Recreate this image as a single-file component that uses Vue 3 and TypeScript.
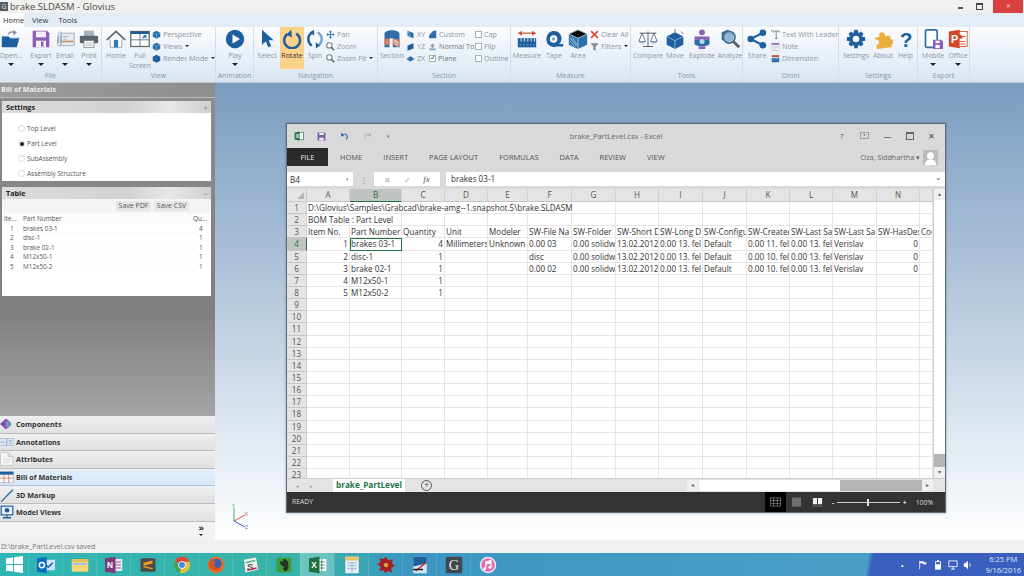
<template>
  <div class="app">
    <header class="title-bar">
      <span class="app-logo">G</span>
      <span class="doc-title">brake.SLDASM  -  Glovius</span>
      <div class="win-btns">
        <span class="win-min"></span>
        <span class="win-max"></span>
        <span class="win-close">✕</span>
      </div>
    </header>

    <nav class="tabs">
      <span class="tab active">Home</span>
      <span class="tab">View</span>
      <span class="tab">Tools</span>
    </nav>

    <section class="ribbon">
      <div v-for="group in groups" :key="group.label" class="group" :style="{ width: group.w + 'px' }">
        <div class="group-items">
          <template v-for="(item, i) in group.items" :key="i">
            <div v-if="item.rows" class="stack" :style="{ width: item.w + 'px' }">
              <div v-for="row in item.rows" :key="row.text" class="stack-row" :class="{ strong: row.strong }">
                <span v-if="row.check !== undefined" class="check" :class="{ checked: row.check }"></span>
                <svg v-else-if="row.icon" class="small-icon" viewBox="0 0 24 24" v-html="icons[row.icon]"></svg>
                <span>{{ row.text }}</span>
                <i v-if="row.caret" class="mini-caret"></i>
              </div>
            </div>
            <div v-else class="big" :class="{ selected: item.selected }"
              :style="{ width: item.w + 'px', marginLeft: (item.ml || 0) + 'px' }">
              <svg class="big-icon" viewBox="0 0 24 24" v-html="icons[item.icon!]"></svg>
              <span class="big-label">{{ item.label }}</span>
              <i v-if="item.caret" class="caret"></i>
            </div>
          </template>
        </div>
        <div class="group-label">{{ group.label }}</div>
      </div>
    </section>

    <main class="workspace">
      <aside class="side">
        <div class="side-head">Bill of Materials</div>

        <div class="panel settings">
          <div class="panel-head">Settings <span class="pin">▴</span></div>
          <div class="radio-list">
            <label v-for="lvl in levels" :key="lvl" class="radio-row">
              <span class="radio" :class="{ on: lvl === 'Part Level' }"></span>{{ lvl }}
            </label>
          </div>
        </div>

        <div class="panel bom">
          <div class="panel-head">Table <span class="pin">ᴗ</span></div>
          <div class="bom-actions">
            <span class="bom-btn">Save PDF</span>
            <span class="bom-btn">Save CSV</span>
          </div>
          <div class="bom-row bom-top"><span>Ite...</span><span>Part Number</span><span>Qu...</span></div>
          <div v-for="p in parts" :key="p.n" class="bom-row">
            <span class="c">{{ p.n }}</span><span>{{ p.name }}</span><span class="c">{{ p.qty }}</span>
          </div>
        </div>

        <div class="side-fill"></div>

        <div v-for="a in accordion" :key="a.label" class="acc" :class="{ current: a.label === 'Bill of Materials' }">
          <svg class="acc-icon" viewBox="0 0 24 24" v-html="icons[a.icon]"></svg>
          <span>{{ a.label }}</span>
        </div>
        <div class="acc-more"><span>»</span><i></i></div>
      </aside>

      <div class="viewport">
        <svg class="triad" viewBox="0 0 20 28">
          <path d="M3 18 L3 5" stroke="#3fae5a" fill="none" />
          <path d="M3 18 L14 12" stroke="#d8504a" fill="none" />
          <path d="M3 18 L14 24" stroke="#3f55c8" fill="none" />
          <text x="1" y="5" fill="#3fae5a" font-size="5">Y</text>
          <text x="14" y="13" fill="#d8504a" font-size="5">X</text>
          <text x="14" y="26" fill="#3f55c8" font-size="5">Z</text>
        </svg>

        <div class="excel">
          <div class="xl-title">
            <svg class="xl-logo" viewBox="0 0 16 16">
              <rect x="6" y="2" width="9" height="12" fill="#fff" stroke="#207245" />
              <path d="M1 2.5 9 1v14l-8-1.5z" fill="#207245" />
              <text x="2.6" y="11" font-size="8" fill="#fff" font-weight="700">X</text>
            </svg>
            <svg class="xl-qa" viewBox="0 0 16 16">
              <path d="M1 1h12l2 2v12H1z" fill="#7c5aa8" />
              <rect x="4" y="1.5" width="8" height="4" fill="#eee" />
              <rect x="4" y="10" width="8" height="5" fill="#eee" />
            </svg>
            <svg class="xl-qa" viewBox="0 0 16 16">
              <path d="M3 6c3-4 9-3 10 2 .3 2-1 4-2 5" fill="none" stroke="#2b6cb0" stroke-width="2" />
              <path d="M2 1.5v6h6z" fill="#2b6cb0" />
            </svg>
            <svg class="xl-qa" viewBox="0 0 16 16">
              <path d="M13 6c-3-4-9-3-10 2-.3 2 1 4 2 5" fill="none" stroke="#b4b4b4" stroke-width="2" />
              <path d="M14 1.5v6H8z" fill="#b4b4b4" />
            </svg>
            <span class="xl-drop">▾</span>
            <span class="xl-name">brake_PartLevel.csv - Excel</span>
            <div class="xl-ctrl">
              <span class="xl-help">?</span>
              <svg viewBox="0 0 12 10" class="xl-ribbon-btn"><rect x=".5" y=".5" width="11" height="9" fill="none" stroke="#888" /><path d="M4 3h4L6 6z" fill="#888" /></svg>
              <span class="xl-min"></span>
              <span class="xl-max"></span>
              <span class="xl-x">✕</span>
            </div>
          </div>

          <div class="xl-tabs">
            <span class="xl-file">FILE</span>
            <span v-for="t in xlTabs" :key="t" class="xl-tab">{{ t }}</span>
            <span class="xl-user">Oza, Siddhartha ▾</span>
            <svg class="xl-avatar" viewBox="0 0 16 16">
              <rect width="16" height="16" fill="#bcbcbc" />
              <circle cx="8" cy="6" r="3.6" fill="#fff" />
              <path d="M2 16c0-5 3-6 6-6s6 1 6 6z" fill="#fff" />
            </svg>
          </div>

          <div class="xl-formula">
            <div class="xl-namebox">B4 <span>▾</span></div>
            <span class="xl-dots">⋮</span>
            <div class="xl-fbtns"><span>✕</span><span>✓</span><em>fx</em></div>
            <div class="xl-input">brakes 03-1 <span>⌄</span></div>
          </div>

          <div class="xl-sheet">
            <div class="xl-grid-wrap">
              <div class="xl-grid">
                <div class="corner"><i></i></div>
                <div v-for="(c, i) in columnLetters" :key="'h' + i" class="col-head" :class="{ sel: c === 'B' }">{{ c }}</div>
                <template v-for="r in 23" :key="r">
                  <div class="row-head" :class="{ sel: r === 4 }">{{ r }}</div>
                  <div v-for="cell in rowCells(r)" :key="cell.key" class="cell"
                    :class="{ num: cell.num, active: r === 4 && cell.col === 1 }"
                    :style="cell.span > 1 ? { gridColumn: 'span ' + cell.span } : undefined">{{ cell.text }}</div>
                </template>
              </div>
            </div>
            <div class="xl-vscroll">
              <span class="arrow">▴</span>
              <span class="v-track"></span>
              <span class="v-thumb"></span>
              <span class="arrow">▾</span>
            </div>
          </div>

          <div class="xl-sheets">
            <span class="nav">◂</span><span class="nav">▸</span>
            <span class="sheet-tab">brake_PartLevel</span>
            <span class="sheet-add">+</span>
            <div class="h-scroll">
              <span class="arrow">◂</span>
              <span class="h-track"></span>
              <span class="h-thumb"></span>
              <span class="arrow">▸</span>
            </div>
          </div>

          <div class="xl-status">
            <span class="ready">READY</span>
            <div class="view-btn on">
              <svg viewBox="0 0 12 10"><path d="M.5.5h11v9H.5zM.5 3.5h11M.5 6.5h11M4 .5v9M8 .5v9" fill="none" stroke="#aaa" stroke-width=".6" /></svg>
            </div>
            <div class="view-btn">
              <svg viewBox="0 0 12 10"><path d="M1.5.5h9v9h-9z" fill="#666" stroke="#999" stroke-width=".6" /><path d="M3.5 3h5v4h-5z" fill="none" stroke="#999" stroke-width=".5" /></svg>
            </div>
            <div class="view-btn">
              <svg viewBox="0 0 12 10"><path d="M1 .5h4.5v7H1zM6.5.5H11v7H6.5z" fill="#eee" /><path d="M0 9.5h12" stroke="#999" stroke-width=".6" /></svg>
            </div>
            <div class="zoom-ctl">
              <b>-</b>
              <div class="slider"><span></span></div>
              <b>+</b>
              <span class="pct">100%</span>
            </div>
          </div>
        </div>
      </div>
    </main>

    <div class="status-line">D:\brake_PartLevel.csv saved</div>

    <footer class="taskbar">
      <svg class="start" viewBox="0 0 18 18">
        <path d="M0 2.5 7.5 1.5v7H0zM8.5 1.3 18 0v8.5H8.5zM0 9.5h7.5v7L0 15.5zM8.5 9.5H18V18l-9.5-1.3z" fill="#fff" />
      </svg>
      <div v-for="t in taskIcons" :key="t.id" class="task" :class="{ running: t.id === 'xl' }">
        <svg viewBox="0 0 24 24" v-html="icons[t.id]"></svg>
      </div>
      <div class="tray">
        <span class="tray-up">▴</span>
        <svg viewBox="0 0 12 12"><path d="M2 1v10" stroke="#fff" /><path d="M2.5 1.5h4l1 1.5h3.5l-2 2.5H6.5l-1-1.5h-3z" fill="#fff" /></svg>
        <svg viewBox="0 0 12 12"><rect x="3" y="2" width="6" height="9" fill="none" stroke="#fff" /><path d="M3 5h6v6H3zM5 0h2v2H5z" fill="#fff" /></svg>
        <svg viewBox="0 0 12 12"><path d="M1 1h10v7H1zM6 8v3M3.5 11h5" fill="none" stroke="#fff" /></svg>
        <svg viewBox="0 0 12 12"><path d="M1 4h2l3-3v10L3 8H1z" fill="#fff" /><path d="M8 4c1 1 1 3 0 4" stroke="#fff" fill="none" /></svg>
        <div class="clock"><span>6:25 PM</span><span>9/16/2016</span></div>
      </div>
    </footer>
  </div>
</template>

<script setup lang="ts">
interface StackRow {
  text: string
  icon?: string
  check?: boolean
  caret?: boolean
  strong?: boolean
}

interface RibbonItem {
  w: number
  ml?: number
  label?: string
  icon?: string
  caret?: boolean
  selected?: boolean
  rows?: StackRow[]
}

interface RibbonGroup {
  label: string
  w: number
  items: RibbonItem[]
}

const BLUE = '#1f5f9e'

const icons: Record<string, string> = {
  open: `<path d="M1 9h8l2 2h11l-3 11H1z" fill="${BLUE}"/><path d="M1 9h8l2 2h11" fill="none" stroke="#5b9bd5"/><path d="M8 8c0-4 3-6 7-5l-1-2 5 3-4 4V5c-3-1-5 0-7 3z" fill="#8a8f96"/>`,
  save: `<path d="M2 2h17l3 3v17H2z" fill="#8b5fb5"/><rect x="6" y="3" width="12" height="7" fill="#f3eef8"/><rect x="6" y="14" width="12" height="8" fill="#f3eef8"/><rect x="12" y="15" width="3" height="6" fill="#8b5fb5"/>`,
  email: `<rect x="7" y="5" width="16" height="15" fill="#e8edf4" stroke="#9aa5b3"/><path d="M8 15h14" stroke="#c98f6a" stroke-width="2"/><path d="M10 9h6M10 12h4" stroke="#9aa5b3"/><path d="M3 9v9c0 3 5 3 5 0V6c0-3-4-3-4 0v10c0 1 2 1 2 0V8" fill="none" stroke="#98a2ad"/>`,
  print: `<rect x="6" y="2" width="12" height="7" fill="#a9b0b8"/><rect x="1" y="8" width="22" height="9" rx="1.5" fill="#5c656e"/><rect x="6" y="14" width="12" height="8" fill="#fff" stroke="#7b838b"/><path d="M8 17h8M8 19.5h8" stroke="#aab"/>`,
  home: `<path d="M1 13 12 3l11 10" fill="none" stroke="#5c656e" stroke-width="2"/><path d="M5 12v10h14V12" fill="#fff" stroke="#8f979f"/><rect x="9.5" y="13" width="5" height="9" fill="#2d78b8"/>`,
  full: `<rect x="1" y="3" width="22" height="18" fill="#fff" stroke="#5c656e" stroke-width="1.5"/><rect x="1" y="3" width="22" height="3" fill="#24598f"/><path d="M1 13h22M12 6v15" stroke="#5c656e"/><path d="M15 11l4-3M16 8h3v3" stroke="#2d78b8" fill="none" stroke-width="1.5"/>`,
  cube: `<path d="M12 2 22 7v11l-10 5-10-5V7z" fill="#2a6fa8"/><path d="M12 12 22 7M12 12 2 7M12 12v11" stroke="#8dbbe0" stroke-width="1.5"/>`,
  cubeDark: `<path d="M12 2 22 7v11l-10 5-10-5V7z" fill="${BLUE}"/><path d="M12 12 22 7M12 12 2 7M12 12v11" stroke="#3d7ab5"/>`,
  play: `<circle cx="12" cy="12" r="11" fill="${BLUE}"/><path d="M9 6.5 18 12 9 17.5z" fill="#fff"/>`,
  select: `<path d="M6 1v18l4.5-4 3 7 3.5-1.5-3-7h6z" fill="${BLUE}"/>`,
  rotate: `<path d="M6.5 6A9.5 9.5 0 1 0 17 5.5" fill="none" stroke="${BLUE}" stroke-width="3"/><path d="M11 1 5 7l7 3z" fill="${BLUE}"/>`,
  spin: `<path d="M9 4C3 7 2 15 8 20" fill="none" stroke="${BLUE}" stroke-width="3"/><path d="M15 4c6 3 7 11 1 16" fill="none" stroke="#7ea6cc" stroke-width="3"/><path d="M11 1 6 4l5 4zM13 16l5 4-5 3z" fill="${BLUE}"/>`,
  pan: `<path d="M12 1 8 6h3v5H6V8l-5 4 5 4v-3h5v5H8l4 5 4-5h-3v-5h5v3l5-4-5-4v3h-5V6h3z" fill="${BLUE}"/>`,
  mag: `<circle cx="9" cy="9" r="7" fill="#fff" stroke="#7a8189" stroke-width="3"/><path d="M14 14l8 8" stroke="#5c656e" stroke-width="4"/>`,
  section: `<path d="M3 6c0-6 18-6 18 0v16h-8V11H9v11H3z" fill="#2d6ea8"/><path d="M13 11l8 2v9l-8-3z" fill="#d77c5e"/><path d="M14 13l6 6M14 16l5 5M16 13l4 4" stroke="#fff"/><path d="M3 11l6 1v8l-6-2z" fill="#d77c5e"/>`,
  planeXY: `<path d="M4 2 20 8v14L4 16z" fill="#2d6ea8"/><path d="M4 2l6 10v10" fill="none" stroke="#a8c8e4" stroke-width="2"/>`,
  planeYZ: `<path d="M20 3v14L4 23V9z" fill="#1f5f9e"/>`,
  planeZX: `<path d="M12 6 23 13 12 20 1 13z" fill="#1f5f9e"/><path d="M1 13h22" stroke="#a8c8e4"/>`,
  custom: `<path d="M3 14 14 2h8v20H3z" fill="#2d6ea8"/>`,
  normal: `<path d="M2 17h20l-3 5H5z" fill="#7ea6cc"/><path d="M12 17V5" stroke="#8aa0b5" stroke-width="4"/><path d="M6 12l6-9 6 9z" fill="#8aa0b5"/>`,
  measure: `<path d="M2 5h20" stroke="#c8553d" stroke-width="1.5"/><path d="M1 5l5-3v6zM23 5l-5-3v6z" fill="#c8553d"/><rect x="1" y="11" width="22" height="11" fill="#1f5f9e"/><path d="M5 11v4M9 11v4M13 11v4M17 11v4M21 11v4" stroke="#fff"/><path d="M3 19h18" stroke="#4a85bd" stroke-width="2" stroke-dasharray="2 2"/>`,
  tape: `<path d="M3 11a9 9 0 1 1 15 7h5v3h-8a9 9 0 0 1-12-10z" fill="${BLUE}"/><circle cx="11.5" cy="12" r="4.5" fill="#fff"/><circle cx="11.5" cy="12" r="2" fill="#7ea6cc"/>`,
  area: `<path d="M12 1 23 6v13l-11 5-11-5V6z" fill="#2d6ea8"/><path d="M12 11 23 6M12 11 1 6l11-5 11 5M12 11v13" stroke="#bcd4ea"/><path d="M2 10l8 10M2 14l6 7M5 10l6 9" stroke="#bcd4ea"/>`,
  clear: `<path d="M3 3l18 18M21 3 3 21" stroke="#d1472f" stroke-width="4"/>`,
  filter: `<path d="M1 3h22l-8 9v10h-6V12z" fill="#808a94"/>`,
  compare: `<path d="M12 3v18M6 21h12M2 5h20" stroke="#5c6873" stroke-width="1.2" fill="none"/><path d="M5 5 1 15h8zM19 5l-4 10h8z" fill="none" stroke="#5c6873"/><path d="M1 15c1 3 7 3 8 0zM15 15c1 3 7 3 8 0z" fill="#8fb0cf"/>`,
  move: `<path d="M12 4 22 9v10l-10 5-10-5V9z" fill="${BLUE}"/><path d="M12 14 22 9M12 14 2 9M12 14v10" stroke="#8dbbe0"/><path d="M12 0v4M19 3l3 3" stroke="#5c656e"/>`,
  explode: `<circle cx="12" cy="4" r="3.5" fill="#8b5fb5"/><path d="M3 9h18v4H3z" fill="#8b5fb5"/><path d="M3 13h18v5c-2 4-16 4-18 0z" fill="#2d6ea8"/><circle cx="12" cy="15" r="3" fill="#bcd4ea"/><path d="M8 21h8v3H8z" fill="#8b5fb5"/>`,
  analyze: `<path d="M2 4 9 1l7 3v9l-7 3-7-3z" fill="#2d6ea8"/><circle cx="11" cy="10" r="7" fill="#bcd4ea" fill-opacity=".7" stroke="#4a6a85" stroke-width="2"/><path d="M16 15l7 7" stroke="#5c656e" stroke-width="3.5"/>`,
  share: `<circle cx="4.5" cy="12" r="4" fill="${BLUE}"/><circle cx="19" cy="4.5" r="4" fill="${BLUE}"/><circle cx="19" cy="19.5" r="4" fill="${BLUE}"/><path d="M19 4.5 4.5 12 19 19.5" fill="none" stroke="${BLUE}" stroke-width="2.5"/>`,
  leader: `<path d="M7 3h15M14 3v20M10 23h8M7 3v4M22 3v4" stroke="#5c6873" stroke-width="2" fill="none"/><circle cx="2" cy="2" r="2" fill="#5c6873"/>`,
  note: `<rect x="2" y="3" width="20" height="19" fill="#f2f4f7" stroke="#9aa5b3"/><rect x="2" y="3" width="20" height="4" fill="#8b5fb5"/><path d="M5 11h14M5 15h14M5 19h10" stroke="#9aa5b3"/>`,
  dimension: `<rect x="2" y="10" width="20" height="12" fill="#2d6ea8"/><rect x="2" y="3" width="20" height="5" fill="#c8553d"/><path d="M6 10v4M10 10v4M14 10v4M18 10v4" stroke="#fff"/>`,
  gear: `<path d="M10 1h4l1 4 3-2 3 3-2 3 4 1v4l-4 1 2 3-3 3-3-2-1 4h-4l-1-4-3 2-3-3 2-3-4-1v-4l4-1-2-3 3-3 3 2z" fill="${BLUE}"/><circle cx="12" cy="12" r="4" fill="#eef3f9"/>`,
  about: `<path d="M3 9h5c-1-7 8-7 7 0h6v5c5-1 5 7 0 6v3H3v-5c5 1 5-7 0-6z" fill="#ecae3a" transform="rotate(-8 12 12)"/>`,
  help: `<text x="12" y="21" text-anchor="middle" font-size="25" font-weight="700" font-family="Liberation Sans, sans-serif" fill="${BLUE}">?</text>`,
  mobile: `<rect x="3" y="1" width="14" height="21" rx="2" fill="#fff" stroke="#2d6ea8" stroke-width="2"/><path d="M12 13h10l2 2v9H12z" fill="#8b5fb5"/><rect x="15" y="14" width="5" height="3" fill="#fff"/><rect x="15" y="19" width="5" height="4" fill="#fff"/>`,
  office: `<rect x="9" y="3" width="14" height="18" fill="#fff" stroke="#d24726"/><path d="M12 6a5 5 0 0 1 5 5h-5zM14 9h7M14 15h7M14 18h7" fill="#d24726" stroke="#d24726"/><path d="M1 3 14 1v22L1 21z" fill="#d24726"/><text x="3.5" y="17" font-size="13" font-weight="700" fill="#fff" font-family="Liberation Sans, sans-serif">P</text>`,
  components: `<path d="M0 12 10 3l6 4v10l-6 4z" fill="#7d4fb0"/><path d="M10 7l8 2v7l-8 2z" fill="#a98ad0"/><rect x="13" y="9" width="6" height="6" fill="#4fa3a3"/>`,
  annotations: `<rect x="-2" y="6" width="13" height="12" fill="#dfe8f2" stroke="#8ea9c4"/><rect x="12" y="6" width="12" height="12" fill="#dfe8f2" stroke="#8ea9c4"/><path d="M1 12h7M15 10h6M15 14h6" stroke="#5d8bb8"/>`,
  attributes: `<path d="M1 1h13l8 7v15H1z" fill="#f5f5f5" stroke="#b5b5b5"/><path d="M14 1v7h8" fill="#ddd" stroke="#b5b5b5"/><path d="M5 12h12M5 15h12M5 18h12" stroke="#ccc"/>`,
  bom: `<rect x="-1" y="3" width="24" height="19" fill="#f5f5f5" stroke="#aaa"/><rect x="-1" y="3" width="24" height="5" fill="${BLUE}"/><path d="M-1 14h24M7 8v14M15 8v14" stroke="#c8553d"/>`,
  markup: `<path d="M1 23 21 2l2 2L3 24z" fill="#2d6ea8"/>`,
  views: `<rect x="2" y="2" width="20" height="15" fill="#e8f0f8" stroke="${BLUE}" stroke-width="2"/><circle cx="12" cy="9" r="4" fill="${BLUE}"/><path d="M12 17v3M5 22h14" stroke="${BLUE}" stroke-width="2.5"/>`,
  ol: `<rect x="10" y="5" width="14" height="14" fill="#cfe2f5"/><path d="M12 12l3 3 6-6" stroke="#0a5fa8" stroke-width="2" fill="none"/><path d="M0 3 13 1v22L0 21z" fill="#0a6cbd"/><circle cx="6.5" cy="12" r="3.5" fill="none" stroke="#fff" stroke-width="2"/>`,
  folder: `<rect x="1" y="4" width="22" height="17" rx="1" fill="#f5d67a"/><rect x="1" y="4" width="22" height="4" fill="#e6c15a"/><rect x="3" y="9" width="18" height="3" fill="#9cc7e8"/>`,
  one: `<rect x="12" y="4" width="11" height="16" fill="#e9e3f1"/><path d="M14 8h7M14 12h7M14 16h7" stroke="#80397b"/><path d="M0 3 14 1v22L0 21z" fill="#80397b"/><text x="2.5" y="16" font-size="11" font-weight="700" fill="#fff" font-family="Liberation Sans, sans-serif">N</text>`,
  sublime: `<rect x="2" y="3" width="20" height="18" rx="2" fill="#4a4a4a"/><path d="M6 9l12-3v4L6 13zM6 13l12 3v2L6 15z" fill="#f39c1f"/>`,
  chrome: `<circle cx="12" cy="12" r="11" fill="#e0c33e"/><path d="M12 12 2.5 6.5A11 11 0 0 1 22 7.5H12z" fill="#d8483b"/><path d="M12 12 2.5 6.5A11 11 0 0 0 9 22.6z" fill="#3fa35c"/><circle cx="12" cy="12" r="5" fill="#fff"/><circle cx="12" cy="12" r="4" fill="#4a88e0"/>`,
  firefox: `<circle cx="12" cy="12" r="11" fill="#e8702a"/><circle cx="13" cy="10" r="6.5" fill="#3c5fa8"/><path d="M2 12c2 8 14 10 20 3-4 3-10 2-12-2-1-3 0-5 2-6-4 0-6-2-5-4C3 6 2 9 2 12z" fill="#d9531e"/>`,
  slack: `<path d="M4 5l16-3 3 16-17 4z" fill="#f4f1ea"/><path d="M6 9l13-3" stroke="#3eb991" stroke-width="2"/><path d="M8 19l13-3" stroke="#e01563" stroke-width="2"/><text x="8" y="18" font-size="13" font-weight="700" fill="#555" font-family="Liberation Sans, sans-serif">S</text>`,
  evernote: `<rect x="2" y="2" width="20" height="20" rx="3" fill="#3f9b3f"/><path d="M7 7h4V4c3 0 7 1 7 9 0 5-2 7-4 7s-3-1-3-3c0-3 4-2 3-1-4-3-8-4-7-9z" fill="#232"/>`,
  xl: `<rect x="11" y="4" width="12" height="16" fill="#fff"/><path d="M14 8h7M14 12h7M14 16h7M17 4v16" stroke="#207245"/><path d="M0 3 14 1v22L0 21z" fill="#207245"/><text x="3" y="16" font-size="11" font-weight="700" fill="#fff" font-family="Liberation Sans, sans-serif">X</text>`,
  calc: `<rect x="3" y="1" width="18" height="22" fill="#e8eef5"/><rect x="3" y="1" width="18" height="5" fill="#e8c26a"/><path d="M6 9h12M6 13h12M6 17h12M12 9v12" stroke="#7ea6cc"/>`,
  red: `<path d="M12 1l3 5 6-2-1 6 4 3-5 3 1 6-6-2-3 3-2-4-6 1 2-6-5-3 5-3-2-5 6 1z" fill="#a41f24"/><circle cx="12" cy="12" r="3" fill="#d8a33a"/>`,
  cad: `<rect x="3" y="1" width="18" height="22" fill="#d7e4f2"/><path d="M3 1h18v9L3 14z" fill="#1f5f9e"/><path d="M6 20 20 9" stroke="#c8302a" stroke-width="2"/><path d="M3 18h13" stroke="#222" stroke-width="2"/>`,
  g: `<rect x="1" y="1" width="22" height="22" rx="2" fill="#3f474f"/><text x="12" y="19" text-anchor="middle" font-size="19" font-family="Liberation Serif, serif" fill="#e8e8e8">G</text>`,
  itunes: `<circle cx="12" cy="12" r="11" fill="#f2e9f4"/><circle cx="12" cy="12" r="9" fill="#df6fae"/><path d="M9 8v9M16 6v9M9 8l7-2v3L9 11z" stroke="#fff" stroke-width="1.5" fill="#fff"/><circle cx="7.5" cy="17" r="2" fill="#fff"/><circle cx="14.5" cy="15" r="2" fill="#fff"/>`
}

const groups: RibbonGroup[] = [
  {
    label: 'File', w: 102, items: [
      { w: 22, label: 'Open...', icon: 'open', caret: true },
      { w: 24, ml: 7, label: 'Export', icon: 'save', caret: true },
      { w: 24, label: 'Email', icon: 'email', caret: true },
      { w: 24, label: 'Print', icon: 'print', caret: true }
    ]
  },
  {
    label: 'View', w: 114, items: [
      { w: 24, ml: 2, label: 'Home', icon: 'home' },
      { w: 24, label: 'Full Screen', icon: 'full' },
      {
        w: 64, rows: [
          { text: 'Perspective', icon: 'cube' },
          { text: 'Views', icon: 'cube', caret: true },
          { text: 'Render Mode', icon: 'cubeDark', caret: true }
        ]
      }
    ]
  },
  { label: 'Animation', w: 38, items: [{ w: 38, label: 'Play', icon: 'play', caret: true }] },
  {
    label: 'Navigation', w: 124, items: [
      { w: 26, label: 'Select', icon: 'select' },
      { w: 24, label: 'Rotate', icon: 'rotate', selected: true },
      { w: 22, label: 'Spin', icon: 'spin' },
      {
        w: 52, rows: [
          { text: 'Pan', icon: 'pan' },
          { text: 'Zoom', icon: 'mag' },
          { text: 'Zoom Fit', icon: 'mag', caret: true }
        ]
      }
    ]
  },
  {
    label: 'Section', w: 133, items: [
      { w: 28, label: 'Section', icon: 'section' },
      {
        w: 22, rows: [
          { text: 'XY', icon: 'planeXY' },
          { text: 'YZ', icon: 'planeYZ' },
          { text: 'ZX', icon: 'planeZX' }
        ]
      },
      {
        w: 46, rows: [
          { text: 'Custom', icon: 'custom' },
          { text: 'Normal To', icon: 'normal', strong: true },
          { text: 'Plane', check: true, strong: true }
        ]
      },
      {
        w: 37, rows: [
          { text: 'Cap', check: false },
          { text: 'Flip', check: false },
          { text: 'Outline', check: false }
        ]
      }
    ]
  },
  {
    label: 'Measure', w: 120, items: [
      { w: 30, ml: 1, label: 'Measure', icon: 'measure' },
      { w: 24, label: 'Tape', icon: 'tape' },
      { w: 24, label: 'Area', icon: 'area' },
      {
        w: 41, rows: [
          { text: 'Clear All', icon: 'clear' },
          { text: 'Filters', icon: 'filter', caret: true }
        ]
      }
    ]
  },
  {
    label: 'Tools', w: 112, items: [
      { w: 34, label: 'Compare', icon: 'compare' },
      { w: 20, label: 'Move', icon: 'move' },
      { w: 30, ml: 2, label: 'Explode', icon: 'explode' },
      { w: 26, label: 'Analyze', icon: 'analyze' }
    ]
  },
  {
    label: 'Omni', w: 96, items: [
      { w: 28, label: 'Share', icon: 'share' },
      {
        w: 68, rows: [
          { text: 'Text With Leader', icon: 'leader' },
          { text: 'Note', icon: 'note' },
          { text: 'Dimension', icon: 'dimension' }
        ]
      }
    ]
  },
  {
    label: 'Settings', w: 79, items: [
      { w: 34, label: 'Settings', icon: 'gear' },
      { w: 20, label: 'About', icon: 'about' },
      { w: 25, label: 'Help', icon: 'help' }
    ]
  },
  {
    label: 'Export', w: 52, items: [
      { w: 30, label: 'Mobile', icon: 'mobile', caret: true },
      { w: 20, label: 'Office', icon: 'office', caret: true }
    ]
  }
]

const levels = ['Top Level', 'Part Level', 'SubAssembly', 'Assembly Structure']

const parts = [
  { n: 1, name: 'brakes 03-1', qty: 4 },
  { n: 2, name: 'disc-1', qty: 1 },
  { n: 3, name: 'brake 02-1', qty: 1 },
  { n: 4, name: 'M12x50-1', qty: 1 },
  { n: 5, name: 'M12x50-2', qty: 1 }
]

const accordion = [
  { label: 'Components', icon: 'components' },
  { label: 'Annotations', icon: 'annotations' },
  { label: 'Attributes', icon: 'attributes' },
  { label: 'Bill of Materials', icon: 'bom' },
  { label: '3D Markup', icon: 'markup' },
  { label: 'Model Views', icon: 'views' }
]

const xlTabs = ['HOME', 'INSERT', 'PAGE LAYOUT', 'FORMULAS', 'DATA', 'REVIEW', 'VIEW']

const columnLetters = ['A', 'B', 'C', 'D', 'E', 'F', 'G', 'H', 'I', 'J', 'K', 'L', 'M', 'N', '']

const sheet: Record<number, string[]> = {
  3: ['Item No.', 'Part Number', 'Quantity', 'Unit', 'Modeler', 'SW-File Na', 'SW-Folder', 'SW-Short D', 'SW-Long D', 'SW-Configu', 'SW-Created', 'SW-Last Sa', 'SW-Last Sa', 'SW-HasDes', 'Cou'],
  4: ['1', 'brakes 03-1', '4', 'Millimeters', 'Unknown', '0.00 03', '0.00 solidw', '13.02.2012', '0.00 13. fel', 'Default', '0.00 11. fel', '0.00 13. fel', 'Verislav', '0', ''],
  5: ['2', 'disc-1', '1', '', '', 'disc', '0.00 solidw', '13.02.2012', '0.00 13. fel', 'Default', '0.00 10. fel', '0.00 13. fel', 'Verislav', '0', ''],
  6: ['3', 'brake 02-1', '1', '', '', '0.00 02', '0.00 solidw', '13.02.2012', '0.00 13. fel', 'Default', '0.00 10. fel', '0.00 13. fel', 'Verislav', '0', ''],
  7: ['4', 'M12x50-1', '1'],
  8: ['5', 'M12x50-2', '1']
}

const rowCells = (r: number) => {
  // rows 1 and 2 hold long text that spills over the next cells
  const lead: Record<number, [string, number]> = {
    1: ['D:\\Glovius\\Samples\\Grabcad\\brake-amg--1.snapshot.5\\brake.SLDASM', 7],
    2: ['BOM Table : Part Level', 2]
  }
  const out: { key: string; col: number; text: string; span: number; num: boolean }[] = []
  let start = 0
  if (lead[r]) {
    out.push({ key: r + '-0', col: 0, text: lead[r][0], span: lead[r][1], num: false })
    start = lead[r][1]
  }
  for (let c = start; c < 15; c++) {
    const text = sheet[r]?.[c] ?? ''
    out.push({ key: r + '-' + c, col: c, text, span: 1, num: /^\d+$/.test(text) })
  }
  return out
}

const taskIcons = ['ol', 'folder', 'one', 'sublime', 'chrome', 'firefox', 'slack', 'evernote', 'xl', 'calc', 'red', 'cad', 'g', 'itunes']
  .map((id) => ({ id }))
</script>

<style>
html,
body {
  margin: 0;
  background: #fff;
}
</style>

<style scoped>
.app {
  width: 1024px;
  height: 576px;
  display: flex;
  flex-direction: column;
  overflow: hidden;
  font-family: "Open Sans", "Liberation Sans", sans-serif;
  color: #333;
}

.title-bar {
  height: 13px;
  flex: none;
  display: flex;
  align-items: center;
  background: #f0f0ee;
  font-size: 9.5px;
  color: #4a4a4a;
}

.app-logo {
  width: 8px;
  height: 9px;
  margin-right: 2px;
  background: #555c66;
  color: #ddd;
  font-size: 7px;
  line-height: 9px;
  text-align: center;
}

.doc-title {
  white-space: pre;
}

.win-btns {
  margin-left: auto;
  display: flex;
  align-items: center;
  height: 13px;
}

.win-min {
  width: 5px;
  height: 2px;
  margin-top: 3px;
  background: #555;
}

.win-max {
  width: 5px;
  height: 4px;
  margin-left: 13px;
  border: 1px solid #444;
  border-top-width: 2px;
}

.win-close {
  width: 30px;
  height: 13px;
  margin-left: 10px;
  margin-right: 1px;
  background: #d9403f;
  color: #f5dada;
  font-size: 6px;
  line-height: 13px;
  text-align: center;
}

.tabs {
  height: 14px;
  flex: none;
  display: flex;
  background: #e4ecf5;
  font-size: 7.5px;
}

.tab {
  padding: 0 2px 0 8px;
  line-height: 14px;
}

.tab.active {
  padding: 0 3px;
  background: #fdfdfe;
  width: 18px;
}

.ribbon {
  height: 56px;
  flex: none;
  display: flex;
  background: linear-gradient(#fbfcfe, #dae5f2);
  border-bottom: 1px solid #b9c8d8;
  box-sizing: border-box;
}

.group {
  flex: none;
  display: flex;
  flex-direction: column;
  box-sizing: border-box;
  border-right: 1px solid #d4deea;
}

.group-items {
  height: 43px;
  display: flex;
}

.group-label {
  font-size: 7px;
  line-height: 9px;
  color: #8b97a3;
  text-align: center;
  margin-top: 1px;
}

.big {
  flex: none;
  display: flex;
  flex-direction: column;
  align-items: center;
  box-sizing: border-box;
  padding-top: 2px;
  height: 42px;
}

.big.selected {
  background: #fbd28a;
}

.big.selected .big-label {
  color: #333;
}

.big-icon {
  width: 20px;
  height: 20px;
  flex: none;
}

.big-label {
  font-size: 7px;
  line-height: 10px;
  margin-top: 2px;
  color: #8b97a3;
  text-align: center;
  white-space: pre-line;
}

.caret {
  width: 0;
  height: 0;
  margin-top: 2px;
  border: 3px solid transparent;
  border-top-color: #222;
  border-bottom: 0;
}

.stack {
  flex: none;
  display: flex;
  flex-direction: column;
  padding-top: 1px;
  box-sizing: border-box;
}

.stack-row {
  height: 12px;
  display: flex;
  align-items: center;
  gap: 1px;
  font-size: 7.2px;
  color: #8b97a3;
  white-space: nowrap;
}

.stack-row.strong {
  color: #6e7883;
}

.small-icon {
  width: 9px;
  height: 9px;
  flex: none;
  margin-right: 1px;
}

.check {
  width: 5px;
  height: 5px;
  flex: none;
  margin-left: 1px;
  margin-right: 1px;
  border: 1px solid #a8b0b8;
  background: #fff;
  position: relative;
}

.check.checked::after {
  content: "✓";
  position: absolute;
  left: 0;
  top: -3px;
  font-size: 7px;
  line-height: 10px;
  color: #333;
}

.mini-caret {
  width: 0;
  height: 0;
  margin-left: 2px;
  border: 2px solid transparent;
  border-top-color: #222;
  border-bottom: 0;
}

.workspace {
  flex: 1;
  min-height: 0;
  display: flex;
}

.side {
  width: 215px;
  flex: none;
  display: flex;
  flex-direction: column;
  background: linear-gradient(#8c8c8c, #7f7f7f 50%, #a8a8a8 75%);
}

.side-head {
  height: 14px;
  line-height: 14px;
  padding-left: 1px;
  font-size: 7px;
  font-weight: 700;
  color: #eee;
  background: linear-gradient(90deg, #9c9c9c, #8e8e8e);
  border-bottom: 1px solid #bbb;
}

.panel {
  margin: 3px 4px 0 2px;
  background: #fff;
}

.settings {
  height: 80px;
  margin-top: 3px;
}

.panel-head {
  height: 12px;
  display: flex;
  justify-content: space-between;
  padding: 0 4px;
  font-size: 7.2px;
  font-weight: 700;
  line-height: 12px;
  color: #222;
  background: linear-gradient(90deg, #dcdcdc, #d2d2d2 60%, #e8e8e8 80%, #cfcfcf);
}

.pin {
  font-weight: 400;
  color: #999;
  font-size: 6px;
}

.radio-list {
  display: flex;
  flex-direction: column;
  padding-top: 8px;
  padding-left: 16px;
}

.radio-row {
  height: 15px;
  display: flex;
  align-items: center;
  gap: 2px;
  font-size: 6.5px;
  color: #555;
}

.radio {
  width: 5px;
  height: 5px;
  border-radius: 50%;
  border: 1px solid #d8d8d8;
  background: #fff;
  position: relative;
}

.radio.on::after {
  content: "";
  position: absolute;
  left: 0.5px;
  top: 0.5px;
  width: 4px;
  height: 4px;
  border-radius: 50%;
  background: #222;
}

.bom {
  height: 109px;
  margin-top: 6px;
}

.bom-actions {
  height: 14px;
  display: flex;
  justify-content: flex-end;
  align-items: center;
  gap: 3px;
  padding-right: 22px;
  background: #f4f4f4;
}

.bom-btn {
  width: 35px;
  height: 10px;
  line-height: 10px;
  font-size: 7px;
  text-align: center;
  color: #555;
  background: #e6e6e6;
}

.bom-row {
  display: grid;
  grid-template-columns: 19px 1fr 18px;
  height: 9.4px;
  line-height: 9.4px;
  font-size: 6.4px;
  color: #555;
  padding-left: 2px;
  border-bottom: 1px solid #fafafa;
  box-sizing: border-box;
}

.bom-top {
  height: 11px;
  line-height: 11px;
  background: #fbfbfb;
}

.c {
  padding-left: 6px;
}

.side-fill {
  flex: 1;
}

.acc {
  height: 17.6px;
  flex: none;
  display: flex;
  align-items: center;
  box-sizing: border-box;
  font-size: 7.2px;
  font-weight: 700;
  color: #333;
  background: linear-gradient(#efefef, #e0e0e0);
  border-bottom: 1px solid #bcbcbc;
}

.acc.current {
  background: linear-gradient(#e4f0fb, #d4e6f6);
  border-bottom-color: #a9c4dc;
}

.acc-icon {
  width: 14px;
  height: 14px;
  flex: none;
  margin-right: 2px;
}

.acc-more {
  height: 18.5px;
  flex: none;
  display: flex;
  flex-direction: column;
  align-items: flex-end;
  padding-right: 11px;
  background: #f2f2f2;
  font-size: 9px;
  line-height: 12px;
  font-weight: 700;
}

.acc-more i {
  width: 0;
  height: 0;
  margin-right: 1px;
  border: 2px solid transparent;
  border-top-color: #222;
  border-bottom: 0;
}

.viewport {
  flex: 1;
  position: relative;
  background: linear-gradient(#7b9dc0, #a6bdd6 35%, #dce6f0 75%, #ffffff);
}

.triad {
  position: absolute;
  left: 16px;
  bottom: 9px;
  width: 20px;
  height: 28px;
}

/* the Excel window sits freely on the viewport, like a desktop window */
.excel {
  position: absolute;
  left: 71px;
  top: 40px;
  width: 660px;
  height: 390px;
  box-sizing: border-box;
  display: flex;
  flex-direction: column;
  border: 1px solid #5d6d7d;
  background: #d9d9d9;
  box-shadow: 0 0 2px rgba(40, 60, 80, 0.5);
  font-size: 8.15px;
  color: #444;
}

.xl-title {
  height: 24px;
  flex: none;
  display: flex;
  align-items: center;
  padding-left: 7px;
}

.xl-logo {
  width: 10px;
  height: 10px;
}

.xl-qa {
  width: 9px;
  height: 9px;
  margin-left: 13px;
}

.xl-qa + .xl-qa {
  margin-left: 14px;
}

.xl-drop {
  margin-left: 15px;
  font-size: 5px;
  color: #777;
}

.xl-name {
  position: absolute;
  left: 0;
  right: 0;
  top: 7px;
  text-align: center;
  font-size: 7.5px;
  color: #666;
  pointer-events: none;
}

.xl-ctrl {
  margin-left: auto;
  display: flex;
  align-items: center;
  position: relative;
  height: 12px;
  margin-top: -1px;
  width: 110px;
  color: #555;
}

.xl-help {
  margin-left: 5px;
  font-size: 8px;
}

.xl-ribbon-btn {
  width: 9px;
  height: 7px;
  margin-left: 17px;
}

.xl-min {
  width: 7px;
  height: 1px;
  margin-left: 15px;
  margin-top: 3px;
  background: #777;
}

.xl-max {
  width: 6px;
  height: 5px;
  margin-left: 15px;
  border: 1px solid #666;
  border-top-width: 2px;
}

.xl-x {
  margin-left: 14px;
  font-size: 8px;
  color: #444;
}

.xl-tabs {
  height: 18px;
  flex: none;
  display: flex;
  align-items: center;
  font-size: 7.5px;
  color: #555;
}

.xl-file {
  width: 41px;
  height: 18px;
  line-height: 18px;
  background: #2b2b2b;
  color: #e8e8e8;
  text-align: center;
  margin-right: 12px;
}

.xl-tab {
  margin-right: 21px;
}

.xl-user {
  margin-left: auto;
  margin-right: 3px;
  font-size: 7.2px;
  color: #666;
}

.xl-avatar {
  width: 15px;
  height: 15px;
  margin-right: 7px;
}

.xl-formula {
  height: 14px;
  flex: none;
  display: flex;
  align-items: center;
  padding-top: 6px;
}

.xl-namebox {
  width: 66px;
  height: 14px;
  display: flex;
  justify-content: space-between;
  align-items: center;
  padding: 0 4px 0 3px;
  box-sizing: border-box;
  background: #fff;
  color: #333;
}

.xl-namebox span {
  color: #888;
  font-size: 5px;
}

.xl-dots {
  width: 21px;
  text-align: center;
  color: #888;
}

.xl-fbtns {
  width: 66px;
  height: 14px;
  display: flex;
  align-items: center;
  justify-content: space-around;
  background: #fff;
  color: #aaa;
  padding: 0 4px;
  box-sizing: border-box;
}

.xl-fbtns em {
  font-family: "Liberation Serif", serif;
  color: #555;
  font-size: 9px;
}

.xl-input {
  flex: 1;
  height: 14px;
  line-height: 14px;
  margin-left: 6px;
  padding-left: 5px;
  display: flex;
  justify-content: space-between;
  background: #fff;
  color: #333;
}

.xl-input span {
  margin-right: 3px;
  margin-top: -2px;
  color: #666;
}

.xl-sheet {
  margin-top: 3px;
  height: 289px;
  flex: none;
  display: flex;
  background: #fff;
}

.xl-grid-wrap {
  width: 646px;
  height: 289px;
  overflow: hidden;
}

.xl-grid {
  display: grid;
  grid-template-columns: 20px 43px 52px 43px 43px 40px 44px 44px 43px 44px 44px 43px 43px 44px 43px 13px;
  grid-template-rows: 13px repeat(23, 12.15px);
  width: 646px;
}

.corner {
  background: #e4e4e4;
  border-right: 1px solid #ccc;
  border-bottom: 1px solid #ccc;
  position: relative;
}

.corner i {
  position: absolute;
  right: 2px;
  bottom: 2px;
  border-style: solid;
  border-width: 0 0 7px 7px;
  border-color: transparent transparent #b5b5b5 transparent;
}

.col-head,
.row-head {
  background: #e4e4e4;
  text-align: center;
  color: #555;
  box-sizing: border-box;
  border-right: 1px solid #d0d0d0;
  border-bottom: 1px solid #c6c6c6;
  font-size: 8.15px;
  line-height: 12px;
}

.col-head.sel {
  background: #c0c4c0;
  color: #217346;
  border-bottom: 1px solid #217346;
}

.row-head.sel {
  background: #c0c4c0;
  color: #217346;
  border-right: 1px solid #217346;
}

.cell {
  box-sizing: border-box;
  border-right: 1px solid #e6e6e6;
  border-bottom: 1px solid #e6e6e6;
  padding: 0 1px;
  overflow: hidden;
  white-space: nowrap;
  font-size: 8.15px;
  line-height: 11px;
  color: #333;
}

.cell.num {
  text-align: right;
}

.cell.active {
  border: 1px solid #217346;
  line-height: 10px;
  padding: 0;
}

.xl-vscroll {
  width: 12px;
  height: 289px;
  display: flex;
  flex-direction: column;
  background: #fff;
  border-left: 1px solid #d0d0d0;
  box-sizing: border-box;
}

.arrow {
  flex: none;
  height: 11px;
  width: 11px;
  line-height: 11px;
  text-align: center;
  font-size: 6px;
  color: #666;
  background: #f0f0f0;
}

.v-track {
  flex: 1;
  background: #fff;
}

.v-thumb {
  height: 13px;
  flex: none;
  background: #b5b5b5;
}

.xl-sheets {
  height: 14px;
  flex: none;
  display: flex;
  align-items: center;
  background: #e4e4e4;
  border-top: 1px solid #ccc;
  box-sizing: border-box;
}

.nav {
  width: 14px;
  text-align: center;
  font-size: 5px;
  color: #999;
  margin-left: 3px;
}

.nav + .nav {
  margin-left: 0;
}

.sheet-tab {
  margin-left: 15px;
  width: 72px;
  height: 13px;
  line-height: 12px;
  background: #fff;
  color: #217346;
  font-weight: 700;
  text-align: center;
  font-size: 8.2px;
}

.sheet-add {
  width: 9px;
  height: 9px;
  margin-left: 16px;
  border-radius: 50%;
  border: 1px solid #555;
  text-align: center;
  line-height: 8px;
  font-size: 9px;
  color: #555;
}

.h-scroll {
  margin-left: auto;
  margin-right: 12px;
  width: 246px;
  height: 11px;
  display: flex;
}

.h-track {
  flex: none;
  width: 141px;
  background: #fff;
  margin-left: 1px;
}

.h-thumb {
  flex: none;
  width: 82px;
  background: #b5b5b5;
}

.xl-status {
  flex: 1;
  display: flex;
  align-items: stretch;
  background: #333;
  color: #ddd;
  font-size: 6.8px;
}

.ready {
  line-height: 20px;
  margin-left: 5px;
  margin-right: auto;
}

.view-btn {
  width: 21px;
  display: flex;
  align-items: center;
  justify-content: center;
}

.view-btn.on {
  background: #000;
}

.view-btn svg {
  width: 11px;
  height: 10px;
}

.zoom-ctl {
  display: flex;
  align-items: center;
  margin-left: 4px;
  margin-right: 12px;
  gap: 3px;
}

.slider {
  width: 63px;
  height: 1px;
  background: #ccc;
  position: relative;
}

.slider span {
  position: absolute;
  left: 30px;
  top: -3px;
  width: 2px;
  height: 7px;
  background: #ddd;
}

.pct {
  margin-left: 6px;
}

.status-line {
  height: 13px;
  flex: none;
  padding-left: 1px;
  background: #f0f0f0;
  color: #777;
  font-size: 7px;
  line-height: 13px;
}

.taskbar {
  height: 23px;
  flex: none;
  display: flex;
  align-items: center;
  background: linear-gradient(100deg, #2fb5b5 0, #3ab3a8 30%, #3b97c2 40%, #4a9fc6 84.5%, #3a5fbf 85%, #3a5fbf 100%);
}

.start {
  width: 17px;
  height: 17px;
  flex: none;
  margin: 0 5px 0 6px;
}

.task {
  width: 34px;
  height: 23px;
  flex: none;
  box-sizing: border-box;
  display: flex;
  align-items: center;
  justify-content: center;
  border-left: 1px solid rgba(255, 255, 255, 0.12);
}

.task.running {
  background: rgba(255, 255, 255, 0.25);
}

.task svg {
  width: 18px;
  height: 18px;
}

.tray {
  margin-left: auto;
  display: flex;
  align-items: center;
  gap: 5px;
  padding-right: 3px;
}

.tray svg {
  width: 10px;
  height: 10px;
}

.tray-up {
  color: #fff;
  font-size: 5px;
  margin-right: 9px;
}

.clock {
  display: flex;
  flex-direction: column;
  align-items: center;
  margin-left: 7px;
  color: #dfe8f5;
  font-size: 7.5px;
  line-height: 11px;
}
</style>
